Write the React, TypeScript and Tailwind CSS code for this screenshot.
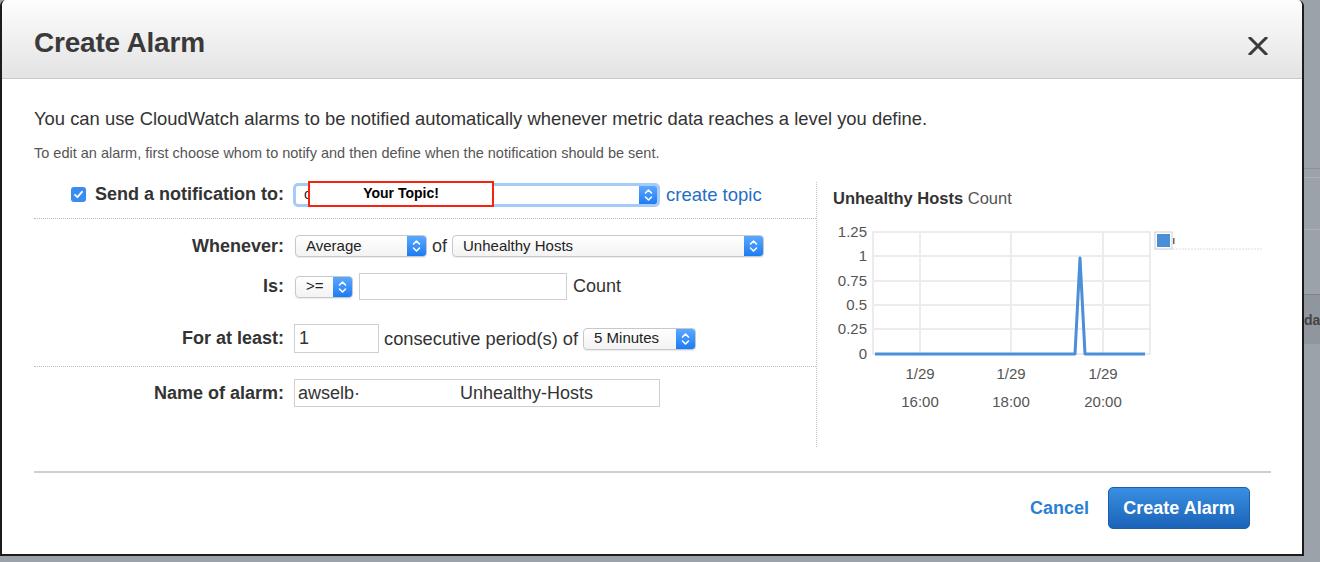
import React from "react";

function Arrows() {
  return (
    <svg width="9" height="14" viewBox="0 0 9 14" fill="none" stroke="white" strokeWidth="1.6" strokeLinecap="round" strokeLinejoin="round">
      <path d="M1.5 5 L4.5 2 L7.5 5" />
      <path d="M1.5 9 L4.5 12 L7.5 9" />
    </svg>
  );
}

function Select({ label, w, h = "h-[22px]" }: { label: string; w: string; h?: string }) {
  return (
    <div className={`${w} ${h} flex items-stretch rounded-[4px] border border-[#c8c8c8] bg-gradient-to-b from-white to-[#f3f3f3] shadow-[0_1px_1px_rgba(0,0,0,0.08)] overflow-hidden`}>
      <div className="flex-1 flex items-center pl-[10px] text-[15px] text-[#222] whitespace-nowrap overflow-hidden">{label}</div>
      <div className="w-[19px] flex items-center justify-center bg-gradient-to-b from-[#5aa8ff] to-[#1b7bf3]">
        <Arrows />
      </div>
    </div>
  );
}

function Chart() {
  const gy = [12, 36, 61, 85, 109, 134];
  const ylab = ["1.25", "1", "0.75", "0.5", "0.25", "0"];
  const gx = [104, 195, 287];
  const xl = ["16:00", "18:00", "20:00"];
  return (
    <svg width="450" height="200" viewBox="0 0 450 200" className="block">
      <rect x="57" y="12" width="277" height="122" fill="white" stroke="#ececec" strokeWidth="2" />
      {gy.map((y) => (
        <line key={y} x1="57" x2="334" y1={y} y2={y} stroke="#ececec" strokeWidth="2" />
      ))}
      {gx.map((x) => (
        <line key={x} x1={x} x2={x} y1="12" y2="134" stroke="#ececec" strokeWidth="2" />
      ))}
      {gy.map((y, i) => (
        <text key={i} x="51" y={y + 5} textAnchor="end" fontSize="15" fill="#555" fontFamily="'Liberation Sans', Arial, sans-serif">
          {ylab[i]}
        </text>
      ))}
      {gx.map((x, i) => (
        <g key={x} fontSize="15" fill="#555" fontFamily="'Liberation Sans', Arial, sans-serif">
          <text x={x} y="159" textAnchor="middle">1/29</text>
          <text x={x} y="187" textAnchor="middle">{xl[i]}</text>
        </g>
      ))}
      <polyline points="59,134 259,134 264,38 269,134 329,134" fill="none" stroke="#4a8fd8" strokeWidth="3" strokeLinejoin="round" />
      <line x1="339" x2="446" y1="29" y2="29" stroke="#ddd" strokeWidth="1" strokeDasharray="2 1" />
      <rect x="339" y="12" width="17" height="17" fill="white" stroke="#ccc" />
      <rect x="341" y="14" width="13" height="13" fill="#4a8fd6" />
      <rect x="357" y="18" width="1.5" height="6" fill="#666" />
    </svg>
  );
}

export default function App() {
  return (
    <div className="w-[1320px] h-[562px] flex bg-[#9ba2a9] overflow-hidden font-['Liberation_Sans',Arial,sans-serif]">
      <div className="w-[1304px] h-[556px] shrink-0 flex flex-col bg-white border-l-2 border-r-2 border-b-2 border-[#1c1c1c] rounded-tl-[6px] rounded-tr-[6px] overflow-hidden">
        {/* Header */}
        <div className="h-[79px] shrink-0 flex items-center justify-between pl-[32px] pr-[33px] bg-gradient-to-b from-[#fdfdfd] to-[#e3e3e3] border-b border-[#c9c9c9]">
          <h1 className="text-[28px] font-bold text-[#3a3a3a] tracking-[-0.2px] pt-[7px]">Create Alarm</h1>
          <svg width="20" height="18" viewBox="0 0 20 18" className="mt-[13px] mr-[1px]">
            <path d="M2 1 L18 17 M18 1 L2 17" stroke="#3a3a3a" strokeWidth="3" strokeLinecap="square" />
          </svg>
        </div>

        {/* Body */}
        <div className="flex-1 flex flex-col pl-[32px] pr-[31px]">
          <p className="mt-[28px] text-[18.4px] leading-[24px] text-[#333] whitespace-nowrap">
            You can use CloudWatch alarms to be notified automatically whenever metric data reaches a level you define.
          </p>
          <p className="mt-[13px] text-[14.5px] leading-[18px] text-[#555] whitespace-nowrap">
            To edit an alarm, first choose whom to notify and then define when the notification should be sent.
          </p>

          <div className="mt-[20px] flex h-[265px]">
            {/* Form */}
            <div className="w-[782px] shrink-0 flex flex-col">
              {/* Row 1 */}
              <div className="h-[37px] pb-[11px] flex items-center border-b border-dotted border-[#bdbdbd]">
                <div className="w-[259px] flex items-center justify-end gap-[9px] pr-[9px]">
                  <div className="w-[15px] h-[15px] rounded-[3px] bg-[#3b8cf0] flex items-center justify-center">
                    <svg width="11" height="11" viewBox="0 0 11 11">
                      <path d="M2 5.8 L4.4 8.2 L9 2.8" stroke="white" strokeWidth="1.8" fill="none" strokeLinecap="round" strokeLinejoin="round" />
                    </svg>
                  </div>
                  <span className="text-[18px] font-bold text-[#333] whitespace-nowrap">Send a notification to:</span>
                </div>
                <div className="relative">
                  <div className="w-[367px] h-[24px] flex items-stretch rounded-[5px] border-[3px] border-[#a6cbf6] bg-white overflow-hidden">
                    <div className="flex-1 flex items-center pl-[8px] text-[14px] text-[#222]">c</div>
                    <div className="w-[18px] flex items-center justify-center bg-gradient-to-b from-[#5aa8ff] to-[#1b7bf3]">
                      <Arrows />
                    </div>
                  </div>
                  <div className="absolute left-[15px] top-[-2px] w-[186px] h-[26px] border-2 border-[#f5230f] bg-white flex items-center justify-center text-[14px] font-bold text-black">
                    Your Topic!
                  </div>
                </div>
                <a className="ml-[6px] text-[18.5px] text-[#1f6fc5] whitespace-nowrap">create topic</a>
              </div>

              {/* Row 2 */}
              <div className="mt-[16px] h-[22px] flex items-center">
                <div className="w-[259px] text-right pr-[9px] text-[18px] font-bold text-[#333]">Whenever:</div>
                <div className="ml-[2px]">
                  <Select label="Average" w="w-[132px]" />
                </div>
                <span className="mx-[5px] text-[18px] text-[#333]">of</span>
                <Select label="Unhealthy Hosts" w="w-[312px]" />
              </div>

              {/* Row 3 */}
              <div className="mt-[16px] h-[27px] flex items-center">
                <div className="w-[259px] text-right pr-[9px] text-[18px] font-bold text-[#333]">Is:</div>
                <div className="ml-[2px]">
                  <Select label="&gt;=" w="w-[58px]" />
                </div>
                <div className="ml-[6px] w-[208px] h-[27px] border border-[#cfcfcf] bg-white" />
                <span className="ml-[6px] text-[18px] text-[#333]">Count</span>
              </div>

              {/* Row 4 */}
              <div className="mt-[24px] h-[29px] flex items-center">
                <div className="w-[259px] text-right pr-[9px] text-[18px] font-bold text-[#333]">For at least:</div>
                <div className="ml-[1px] w-[85px] h-[29px] border border-[#cfcfcf] bg-white flex items-center pl-[4px] text-[18px] text-[#333]">1</div>
                <span className="ml-[5px] text-[18.3px] text-[#333] whitespace-nowrap">consecutive period(s) of</span>
                <div className="ml-[5px]">
                  <Select label="5 Minutes" w="w-[113px]" />
                </div>
              </div>

              {/* Separator */}
              <div className="mt-[13px] border-b border-dotted border-[#bdbdbd]" />

              {/* Row 5 */}
              <div className="mt-[12px] h-[28px] flex items-center">
                <div className="w-[259px] text-right pr-[9px] text-[18px] font-bold text-[#333] whitespace-nowrap">Name of alarm:</div>
                <div className="ml-[1px] w-[366px] h-[28px] border border-[#cfcfcf] bg-white flex items-center pl-[3px] text-[18px] text-[#333] whitespace-pre">
                  {"awselb·                    Unhealthy-Hosts"}
                </div>
              </div>
            </div>

            {/* Chart column */}
            <div className="flex-1 border-l border-dotted border-[#c4c4c4] pl-[16px] pt-[6px] flex flex-col">
              <div className="text-[16.5px] leading-[20px] text-[#333] whitespace-nowrap">
                <span className="font-bold">Unhealthy Hosts</span> <span className="text-[#555]">Count</span>
              </div>
              <div className="mt-[12px] -ml-[17px]">
                <Chart />
              </div>
            </div>
          </div>

          {/* Footer rule */}
          <div className="mt-[24px] border-b-2 border-[#cfcfcf]" />

          {/* Buttons */}
          <div className="mt-[14px] flex items-center justify-end pr-[21px]">
            <button className="text-[18px] font-bold text-[#2a7fd4] mr-[19px]">Cancel</button>
            <button className="w-[142px] h-[42px] rounded-[5px] border border-[#1a5fa8] bg-gradient-to-b from-[#3a8fe2] to-[#1a63b8] text-white text-[18px] font-bold">
              Create Alarm
            </button>
          </div>
        </div>
      </div>

      {/* Right background strip */}
      <div className="flex-1 flex flex-col">
        <div className="h-[168px]" />
        <div className="h-[1px] bg-[#8a9096]" />
        <div className="h-[8px]" />
        <div className="h-[1px] bg-[#a9afb5]" />
        <div className="h-[51px]" />
        <div className="h-[1px] bg-[#a9afb5]" />
        <div className="h-[64px]" />
        <div className="h-[50px] bg-[#8f969d] border-t border-[#7e848a] flex items-center overflow-hidden">
          <span className="text-[14px] font-bold text-[#444] leading-none">da</span>
        </div>
      </div>
    </div>
  );
}
